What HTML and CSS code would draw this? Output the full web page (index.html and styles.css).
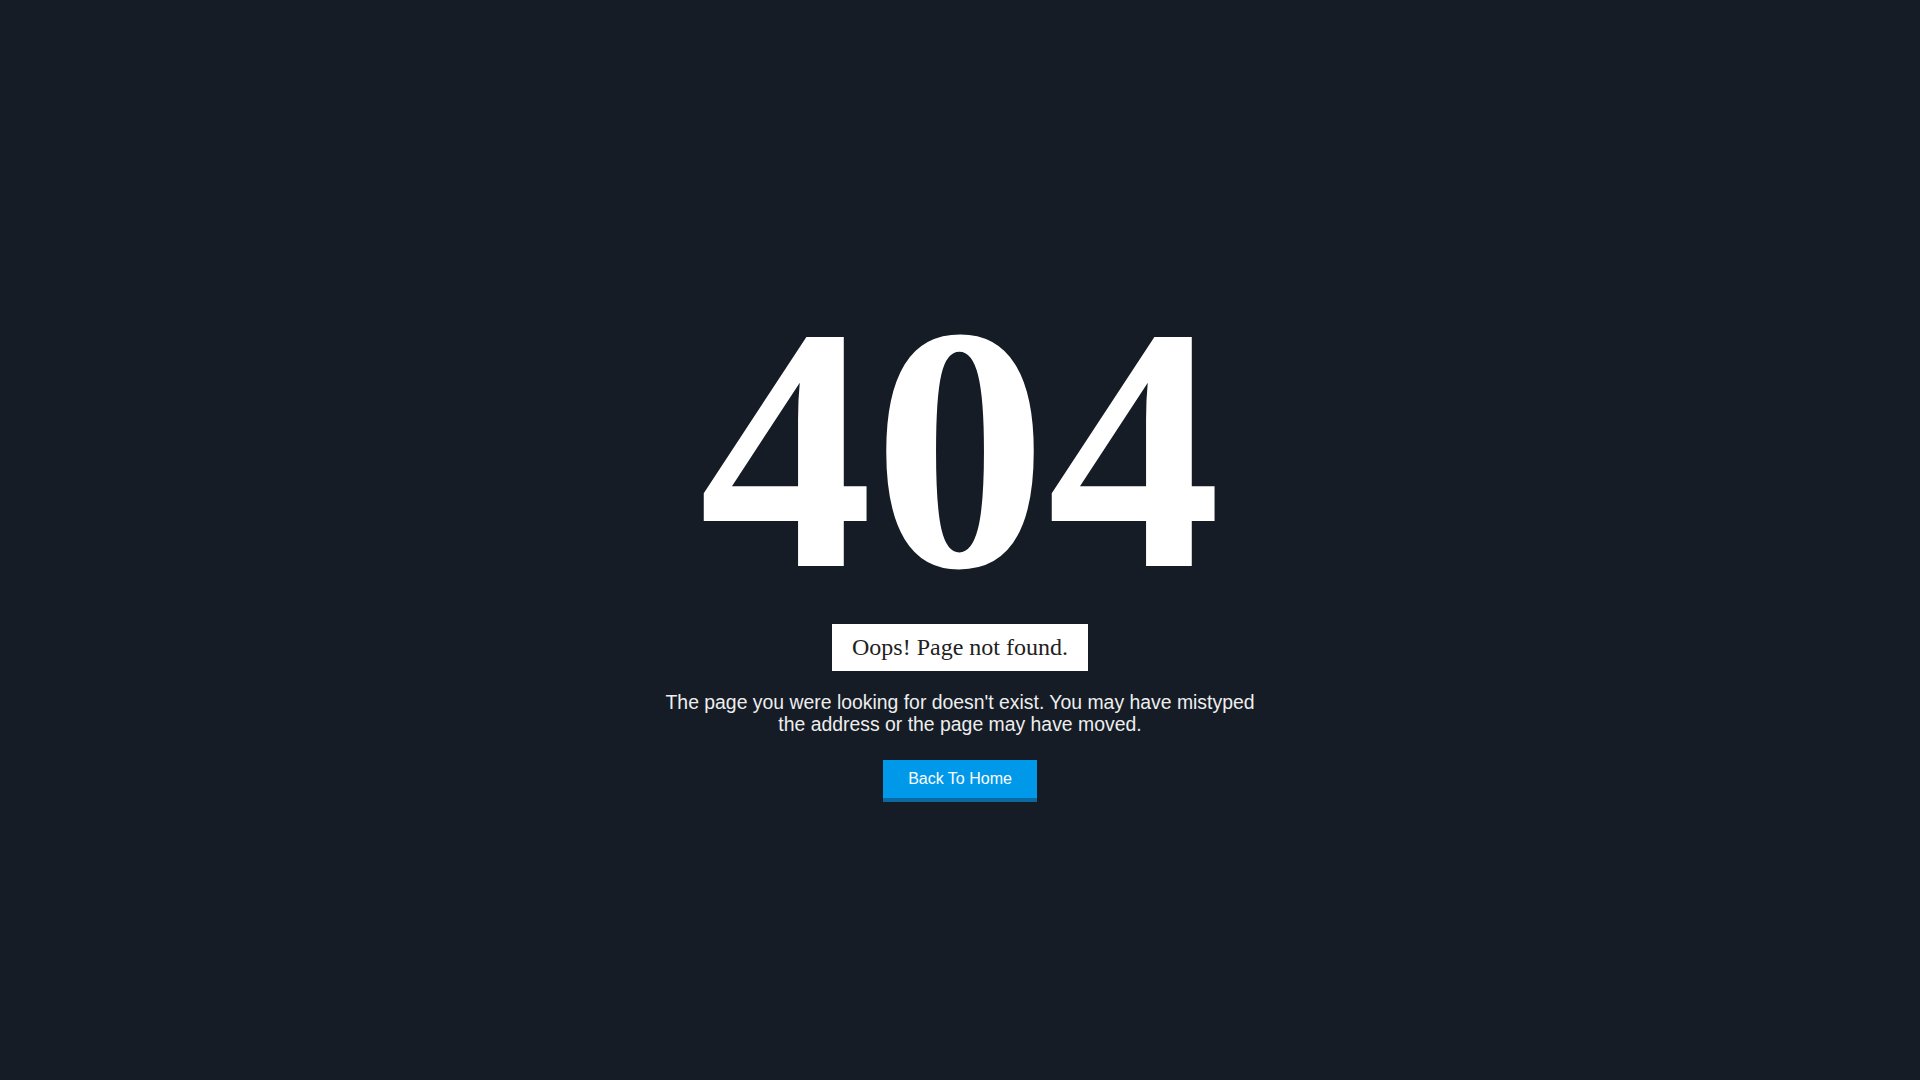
FILE: index.html
```html
<!DOCTYPE html>
<html lang="en">
<head>
<meta charset="utf-8">
<title>404 - Page not found</title>
<link rel="stylesheet" href="styles.css">
</head>
<body>
<main class="notfound">
  <h1 class="code">404</h1>
  <h2 class="badge">Oops! Page not found.</h2>
  <p class="message">The page you were looking for doesn't exist. You may have mistyped<br>the address or the page may have moved.</p>
  <a class="home-btn" href="#">Back To Home</a>
</main>
</body>
</html>
```
FILE: styles.css
```css
html, body {
  margin: 0;
  padding: 0;
  background: #151c26;
}
.notfound {
  min-height: 100vh;
  box-sizing: border-box;
  padding-top: 275px;
  display: flex;
  flex-direction: column;
  align-items: center;
  text-align: center;
}
.code {
  margin: 0 0 1px;
  font-family: "Liberation Serif", "Times New Roman", serif;
  font-weight: 700;
  font-size: 348px;
  line-height: 1;
  color: #ffffff;
}
.badge {
  margin: 0 0 20px;
  padding: 8px 20px;
  background: #ffffff;
  color: #222222;
  font-family: "Liberation Serif", "Times New Roman", serif;
  font-weight: 400;
  font-size: 24px;
  line-height: 31px;
}
.message {
  margin: 0 0 25px;
  font-family: "Liberation Sans", Arial, sans-serif;
  font-size: 19.4px;
  line-height: 22px;
  color: #eeeeee;
}
.home-btn {
  display: inline-block;
  box-sizing: border-box;
  height: 42px;
  padding: 0 25px;
  line-height: 38px;
  background: #0099ea;
  border-bottom: 4px solid #0a6aa0;
  color: #ffffff;
  font-family: "Liberation Sans", Arial, sans-serif;
  font-size: 16px;
  text-decoration: none;
}
```
